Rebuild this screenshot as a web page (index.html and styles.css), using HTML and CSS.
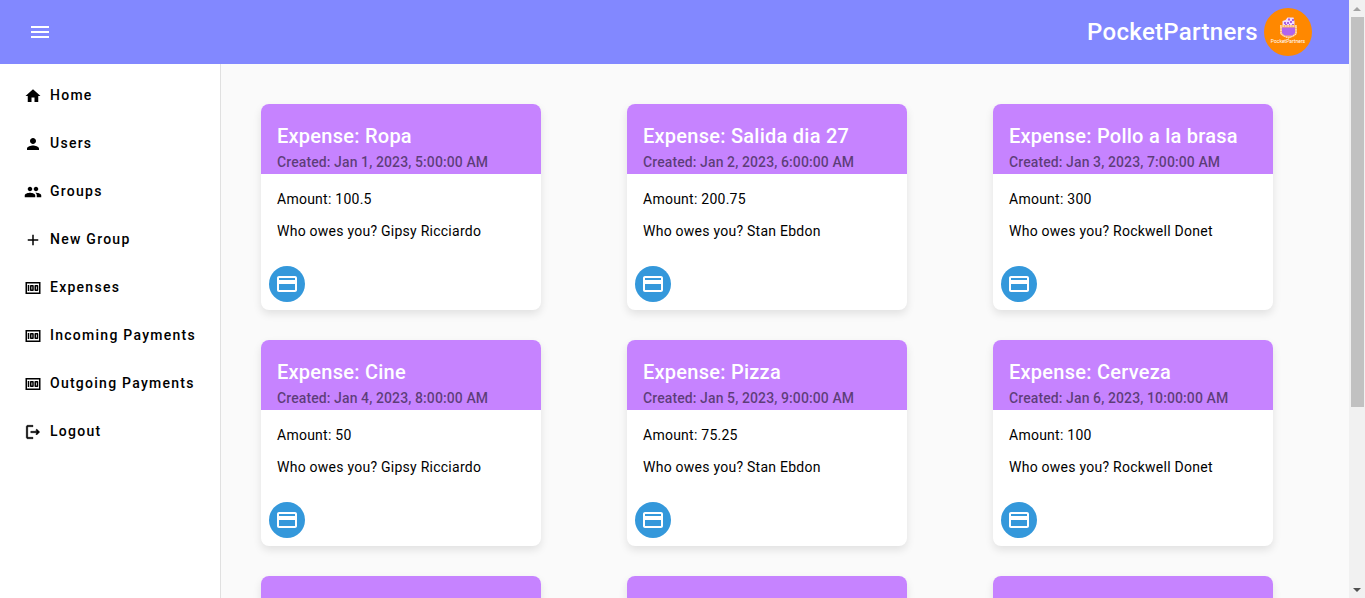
FILE: index.html
```html
<!DOCTYPE html>
<html lang="en">
<head>
<meta charset="utf-8">
<title>PocketPartners</title>
<link rel="stylesheet" href="styles.css">
</head>
<body>
<svg class="sprite" aria-hidden="true">
  <symbol id="menu" viewBox="0 0 24 24"><path d="M3 18h18v-2H3v2zm0-5h18v-2H3v2zm0-7v2h18V6H3z"/></symbol>
  <symbol id="home" viewBox="0 0 24 24"><path d="M10 20v-6h4v6h5v-8h3L12 3 2 12h3v8z"/></symbol>
  <symbol id="person" viewBox="0 0 24 24"><path d="M12 12c2.21 0 4-1.79 4-4s-1.79-4-4-4-4 1.79-4 4 1.79 4 4 4zm0 2c-2.67 0-8 1.34-8 4v2h16v-2c0-2.66-5.33-4-8-4z"/></symbol>
  <symbol id="people" viewBox="0 0 24 24"><path d="M16 11c1.66 0 2.99-1.34 2.99-3S17.66 5 16 5s-3 1.34-3 3 1.34 3 3 3zm-8 0c1.66 0 2.99-1.34 2.99-3S9.66 5 8 5 5 6.34 5 8s1.34 3 3 3zm0 2c-2.33 0-7 1.17-7 3.5V19h14v-2.500C15 14.170 10.330 13 8 13zm8 0c-.29 0-.62.02-.97.05 1.160.84 1.970 1.970 1.970 3.450V19h6v-2.500c0-2.330-4.670-3.500-7-3.500z"/></symbol>
  <symbol id="add" viewBox="0 0 24 24"><path d="M19 13h-6v6h-2v-6H5v-2h6V5h2v6h6v2z"/></symbol>
  <symbol id="money" viewBox="0 0 24 24"><path d="M5 8h2v8H5zm7 0H9c-.55 0-1 .45-1 1v6c0 .55.45 1 1 1h3c.55 0 1-.45 1-1V9c0-.55-.45-1-1-1zm-1 6h-1v-4h1v4zm7-6h-3c-.55 0-1 .45-1 1v6c0 .55.45 1 1 1h3c.55 0 1-.45 1-1V9c0-.55-.45-1-1-1zm-1 6h-1v-4h1v4zM2 4v16h20V4H2zm2 14V6h16v12H4z"/></symbol>
  <symbol id="logout" viewBox="0 0 24 24"><path stroke="currentColor" stroke-width=".5" d="M17 8l-1.410 1.410L17.170 11H9v2h8.170l-1.580 1.580L17 16l4-4-4-4zM5 5h7V3H5c-1.100 0-2 .9-2 2v14c0 1.100.9 2 2 2h7v-2H5V5z"/></symbol>
  <symbol id="card" viewBox="0 0 24 24"><path d="M20 4H4c-1.110 0-1.990.89-1.990 2L2 18c0 1.110.89 2 2 2h16c1.110 0 2-.89 2-2V6c0-1.110-.89-2-2-2zm0 14H4v-6h16v6zm0-10H4V6h16v2z"/></symbol>
</svg>
<div class="shell">
  <div class="app">
    <header class="toolbar">
      <button class="menu-button" type="button" aria-label="Menu"><svg class="icon-large"><use href="#menu"/></svg></button>
      <div class="brand">
        <span class="brand-name">PocketPartners</span>
        <svg class="logo" viewBox="0 0 48 48" role="img" aria-label="Logo">
          <circle cx="24" cy="24" r="24" fill="#ff8800"/>
          <path d="M18.500 18v-5l3-1 2-2.500h6l1 4V18z" fill="#f2dcff"/>
          <path d="M20 14h2v2h-2zm4-3.500h2v2h-2zm4 .5h2v2h-2zm-5 3h2v2h-2zm3-1h2v2h-2zm2 3h2v2h-2zm-7 0h2v2h-2zm4 0h1v2h-1z" fill="#a862e0"/>
          <path d="M16 17h17v9l-3 2.500-5.500 2-5.500-2-3-2.500z" fill="#ffb468"/>
          <path d="M18 19.500h13V25l-2.500 2.500h-8L18 25z" fill="#b064ee"/>
          <path d="M16 18h17M17 19v7l3 2 4.500 2 4.500-2 3-2v-7" fill="none" stroke="#fff0dd" stroke-width="1" stroke-dasharray="1.500 1"/>
          <text class="logo-text" x="24" y="35" text-anchor="middle">PocketPartners</text>
        </svg>
      </div>
    </header>
    <div class="workspace">
      <nav class="sidebar">
        <a class="nav-link" href="#"><svg class="icon"><use href="#home"/></svg>Home</a>
        <a class="nav-link" href="#"><svg class="icon"><use href="#person"/></svg>Users</a>
        <a class="nav-link" href="#"><svg class="icon"><use href="#people"/></svg>Groups</a>
        <a class="nav-link" href="#"><svg class="icon"><use href="#add"/></svg>New Group</a>
        <a class="nav-link" href="#"><svg class="icon"><use href="#money"/></svg>Expenses</a>
        <a class="nav-link" href="#"><svg class="icon"><use href="#money"/></svg>Incoming Payments</a>
        <a class="nav-link" href="#"><svg class="icon"><use href="#money"/></svg>Outgoing Payments</a>
        <a class="nav-link" href="#"><svg class="icon"><use href="#logout"/></svg>Logout</a>
      </nav>
      <main class="expenses">
        <article class="card">
          <div class="card-header"><h2 class="card-title">Expense: Ropa</h2><div class="card-date">Created: Jan 1, 2023, 5:00:00 AM</div></div>
          <div class="card-content"><p class="line">Amount: 100.5</p><p class="line">Who owes you? Gipsy Ricciardo</p></div>
          <div class="card-actions"><button class="pay" type="button" aria-label="Pay"><svg class="icon-large"><use href="#card"/></svg></button></div>
        </article>
        <article class="card">
          <div class="card-header"><h2 class="card-title">Expense: Salida dia 27</h2><div class="card-date">Created: Jan 2, 2023, 6:00:00 AM</div></div>
          <div class="card-content"><p class="line">Amount: 200.75</p><p class="line">Who owes you? Stan Ebdon</p></div>
          <div class="card-actions"><button class="pay" type="button" aria-label="Pay"><svg class="icon-large"><use href="#card"/></svg></button></div>
        </article>
        <article class="card">
          <div class="card-header"><h2 class="card-title">Expense: Pollo a la brasa</h2><div class="card-date">Created: Jan 3, 2023, 7:00:00 AM</div></div>
          <div class="card-content"><p class="line">Amount: 300</p><p class="line">Who owes you? Rockwell Donet</p></div>
          <div class="card-actions"><button class="pay" type="button" aria-label="Pay"><svg class="icon-large"><use href="#card"/></svg></button></div>
        </article>
        <article class="card">
          <div class="card-header"><h2 class="card-title">Expense: Cine</h2><div class="card-date">Created: Jan 4, 2023, 8:00:00 AM</div></div>
          <div class="card-content"><p class="line">Amount: 50</p><p class="line">Who owes you? Gipsy Ricciardo</p></div>
          <div class="card-actions"><button class="pay" type="button" aria-label="Pay"><svg class="icon-large"><use href="#card"/></svg></button></div>
        </article>
        <article class="card">
          <div class="card-header"><h2 class="card-title">Expense: Pizza</h2><div class="card-date">Created: Jan 5, 2023, 9:00:00 AM</div></div>
          <div class="card-content"><p class="line">Amount: 75.25</p><p class="line">Who owes you? Stan Ebdon</p></div>
          <div class="card-actions"><button class="pay" type="button" aria-label="Pay"><svg class="icon-large"><use href="#card"/></svg></button></div>
        </article>
        <article class="card">
          <div class="card-header"><h2 class="card-title">Expense: Cerveza</h2><div class="card-date">Created: Jan 6, 2023, 10:00:00 AM</div></div>
          <div class="card-content"><p class="line">Amount: 100</p><p class="line">Who owes you? Rockwell Donet</p></div>
          <div class="card-actions"><button class="pay" type="button" aria-label="Pay"><svg class="icon-large"><use href="#card"/></svg></button></div>
        </article>
        <article class="card"><div class="card-header"></div></article>
        <article class="card"><div class="card-header"></div></article>
        <article class="card"><div class="card-header"></div></article>
      </main>
    </div>
  </div>
  <div class="scrollbar" aria-hidden="true">
    <svg class="scroll-arrow" viewBox="0 0 16 16"><path d="M8 7l4 4H4z" fill="#a3a3a3"/></svg>
    <div class="scroll-track"><div class="scroll-thumb"></div></div>
    <svg class="scroll-arrow" viewBox="0 0 16 16"><path d="M4 6h8l-4 4z" fill="#505050"/></svg>
  </div>
</div>
</body>
</html>
```

FILE: styles.css
```css
* { box-sizing: border-box; }
body { margin: 0; font-family: Roboto, "Liberation Sans", sans-serif; color: #000; background: #fafafa; }
.sprite { display: none; }
.shell { display: flex; height: 100vh; overflow: hidden; }
.app { flex: 1; min-width: 0; display: flex; flex-direction: column; }

.toolbar { flex: none; height: 64px; padding: 0 37px 0 16px; display: flex; align-items: center; justify-content: space-between; background: #8288ff; color: #fff; }
.menu-button { width: 48px; height: 48px; padding: 12px; border: 0; background: none; color: #fff; cursor: pointer; }
.brand { display: flex; align-items: center; gap: 6px; }
.brand-name { font-size: 24px; font-weight: 500; line-height: 32px; letter-spacing: 0.0125em; }
.logo { width: 48px; height: 48px; display: block; }
.logo-text { font-family: Roboto, sans-serif; font-size: 5px; font-weight: 400; fill: #fff; }
.icon { width: 18px; height: 18px; margin-top: 2px; flex: none; fill: currentColor; }
.icon-large { width: 24px; height: 24px; display: block; fill: currentColor; }

.workspace { flex: 1; min-height: 0; display: flex; }
.sidebar { flex: none; width: 221px; padding-top: 7px; background: #fff; border-right: 1px solid #e0e0e0; }
.nav-link { display: flex; align-items: center; gap: 8px; height: 48px; padding: 0 24px; color: #000; font-size: 14px; font-weight: 500; line-height: 20px; letter-spacing: 0.09em; white-space: nowrap; text-decoration: none; }

.expenses { flex: 1; min-width: 0; display: grid; grid-template-columns: repeat(3, 1fr); grid-auto-rows: max-content; gap: 30px; align-content: start; padding: 40px 20px 0 40px; overflow: hidden; }
.card { width: 280px; max-width: 100%; border-radius: 8px; overflow: hidden; background: #fff; box-shadow: 0 4px 8px rgba(0, 0, 0, 0.1); }
.card-header { min-height: 70px; padding: 16px 16px 0; background: #c683ff; }
.card-title { margin: 0; color: #fff; font-size: 20px; font-weight: 500; line-height: 32px; letter-spacing: 0.0125em; }
.card-date { color: rgba(0, 0, 0, 0.54); font-size: 14px; font-weight: 500; line-height: 20px; letter-spacing: 0.0071em; }
.card-content { display: grid; gap: 14px; padding: 16px 16px 18px; }
.line { margin: 0; font-size: 14px; line-height: 18px; letter-spacing: 0.0179em; }
.card-actions { padding: 8px; }
.pay { display: block; width: 36px; height: 36px; padding: 6px; border: 0; border-radius: 50%; background: #3498db; color: #fff; cursor: pointer; }

.scrollbar { flex: none; width: 16px; display: flex; flex-direction: column; background: #f1f1f1; }
.scroll-arrow { width: 16px; height: 16px; display: block; }
.scroll-track { flex: 1; padding: 1px 1px 0 2px; }
.scroll-thumb { height: 69%; background: #c1c1c1; }
```
